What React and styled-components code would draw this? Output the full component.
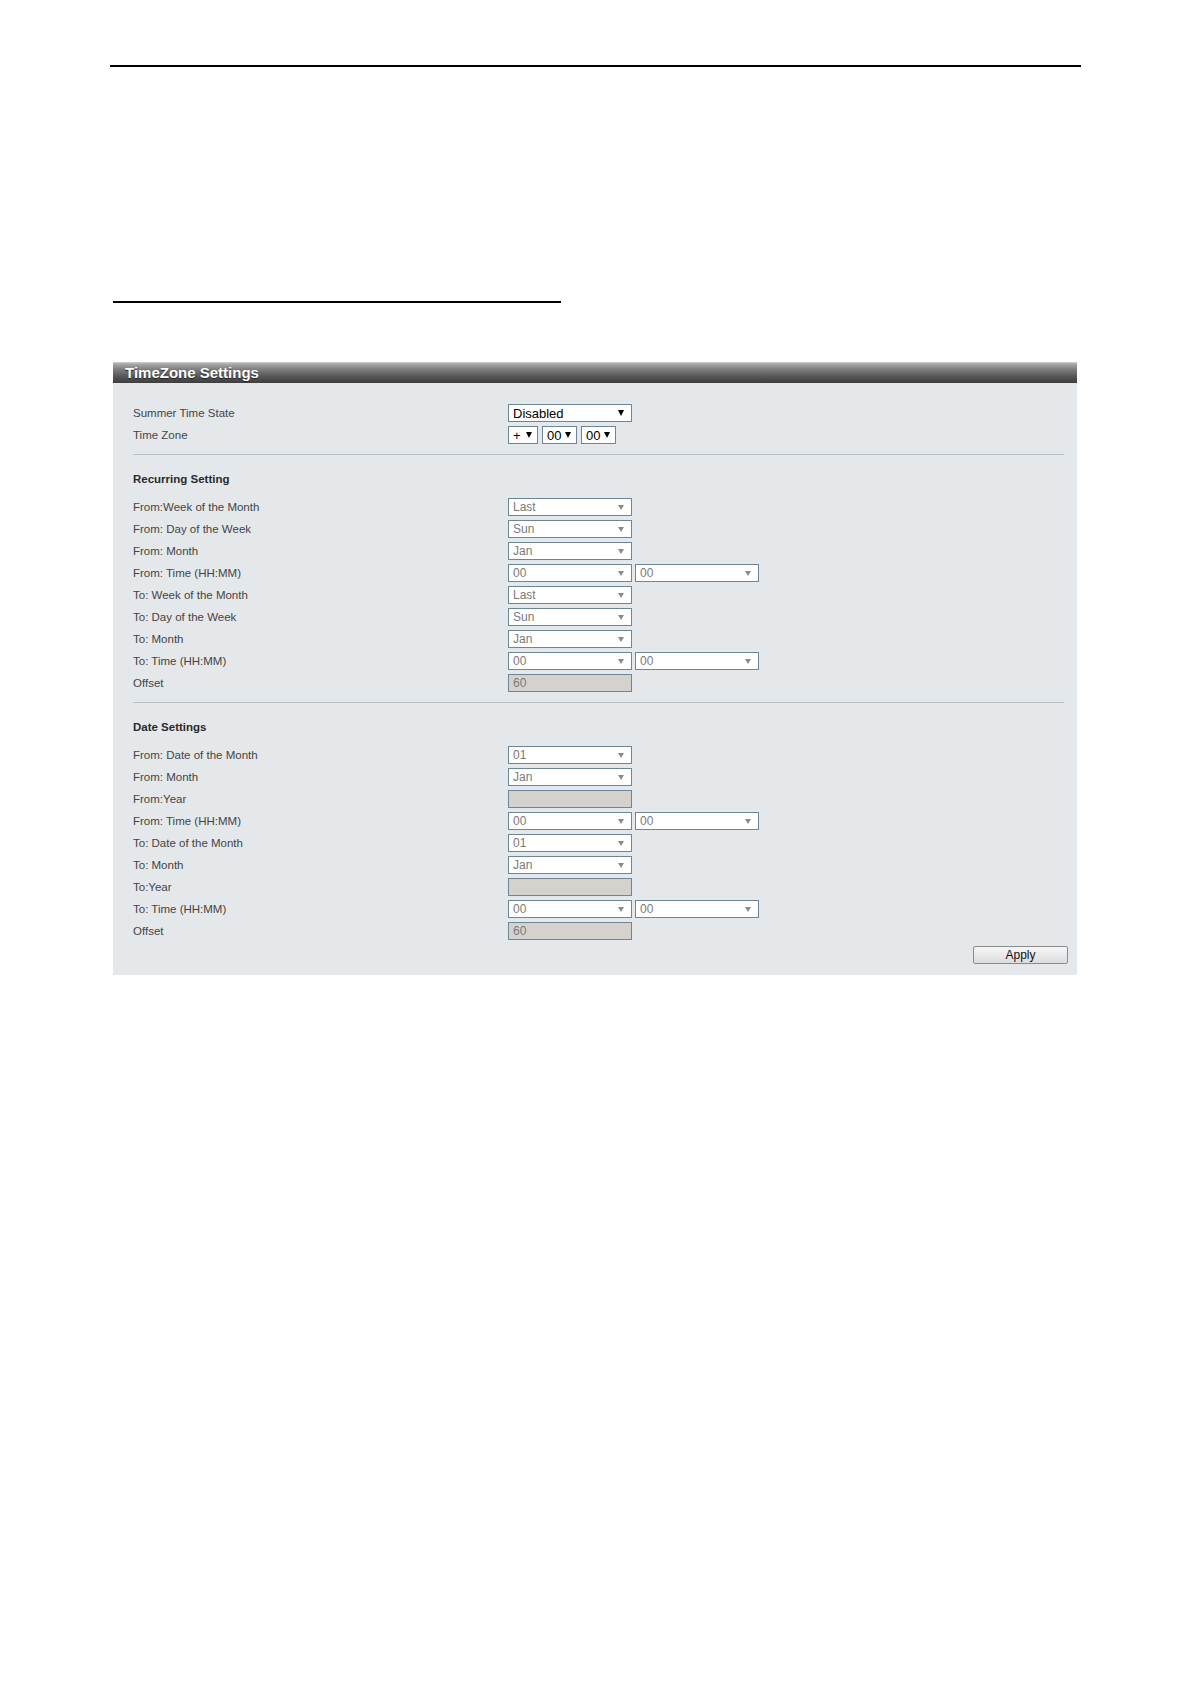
import React from "react";
import styled, { createGlobalStyle } from "styled-components";

const GlobalStyle = createGlobalStyle`
  body {
    margin: 0;
    background: #fff;
    font-family: "Liberation Sans", Arial, sans-serif;
  }
`;

const Page = styled.div`
  width: 1191px;
  min-height: 1684px;
  padding-top: 65px;
  box-sizing: border-box;
  background: #fff;
`;

const TopRule = styled.div`
  margin-left: 110px;
  width: 971px;
  height: 2px;
  background: #000;
`;

const SubRule = styled.div`
  margin: 234px 0 0 113px;
  width: 448px;
  height: 2px;
  background: #000;
`;

const Panel = styled.div`
  margin: 59px 0 0 113px;
  width: 964px;
`;

const PanelHeader = styled.div`
  height: 21px;
  padding-left: 12px;
  line-height: 21px;
  font-size: 15px;
  font-weight: bold;
  color: #fff;
  text-shadow: 0 1px 1px #222;
  background: linear-gradient(
    to bottom,
    #d2d2d2 0,
    #a8a8a8 2px,
    #7e7e7e 35%,
    #555 70%,
    #3e3e3e 100%
  );
`;

const PanelBody = styled.div`
  padding: 21px 9px 11px 20px;
  background: #e4e8eb;
`;

const Row = styled.div`
  display: flex;
  align-items: center;
  height: 18px;
  margin-bottom: 4px;
`;

const Label = styled.div`
  width: 375px;
  flex-shrink: 0;
  font-size: 11.5px;
  color: #444;
  white-space: nowrap;
`;

const Controls = styled.div`
  display: flex;
  gap: ${(p) => p.$gap || 3}px;
`;

/* margin-top collapses with the row's 4px bottom margin */
const Divider = styled.div`
  height: 1px;
  margin: 10px 4px 0 0;
  background: #b9c0c7;
`;

const SectionTitle = styled.div`
  margin: 16px 0 11px;
  height: 16px;
  line-height: 16px;
  font-size: 11.5px;
  font-weight: bold;
  color: #2a2a2a;
`;

const Box = styled.div`
  display: flex;
  align-items: center;
  justify-content: space-between;
  box-sizing: border-box;
  width: ${(p) => p.$width || 116}px;
  height: 18px;
  padding: 0 ${(p) => (p.$compact ? 5 : 7)}px 0 4px;
  border: 1px solid #6d8599;
  background: ${(p) => (p.$readonly ? "#d5d2cd" : "#fff")};
  color: ${(p) => (p.$active ? "#000" : "#7a7a7a")};
  font-size: ${(p) => (p.$active ? 13 : 12)}px;
  white-space: nowrap;
  overflow: hidden;
`;

const Arrow = styled.span`
  flex-shrink: 0;
  width: 0;
  height: 0;
  border-left: ${(p) => (p.$active ? 3 : 3)}px solid transparent;
  border-right: ${(p) => (p.$active ? 3 : 3)}px solid transparent;
  border-top: ${(p) => (p.$active ? 6 : 5)}px solid
    ${(p) => (p.$active ? "#000" : "#8a8a8a")};
`;

const ButtonRow = styled.div`
  display: flex;
  justify-content: flex-end;
  margin-top: 6px;
`;

const Button = styled.button`
  width: 95px;
  height: 18px;
  padding: 0;
  border: 1px solid #8c8c8c;
  border-radius: 2px;
  background: linear-gradient(to bottom, #f6f6f6, #dcdcdc);
  font-family: "Liberation Sans", Arial, sans-serif;
  font-size: 12px;
  color: #111;
`;

const Select = ({ value, width, active, compact }) => (
  <Box $width={width} $active={active} $compact={compact}>
    <span>{value}</span>
    <Arrow $active={active} />
  </Box>
);

const Field = ({ value = "" }) => (
  <Box $width={124} $readonly>
    <span>{value}</span>
  </Box>
);

const time = (
  <Controls>
    <Select value="00" width={124} />
    <Select value="00" width={124} />
  </Controls>
);

const recurring = [
  ["From:Week of the Month", <Select value="Last" width={124} />],
  ["From: Day of the Week", <Select value="Sun" width={124} />],
  ["From: Month", <Select value="Jan" width={124} />],
  ["From: Time (HH:MM)", time],
  ["To: Week of the Month", <Select value="Last" width={124} />],
  ["To: Day of the Week", <Select value="Sun" width={124} />],
  ["To: Month", <Select value="Jan" width={124} />],
  ["To: Time (HH:MM)", time],
  ["Offset", <Field value="60" />],
];

const dates = [
  ["From: Date of the Month", <Select value="01" width={124} />],
  ["From: Month", <Select value="Jan" width={124} />],
  ["From:Year", <Field />],
  ["From: Time (HH:MM)", time],
  ["To: Date of the Month", <Select value="01" width={124} />],
  ["To: Month", <Select value="Jan" width={124} />],
  ["To:Year", <Field />],
  ["To: Time (HH:MM)", time],
  ["Offset", <Field value="60" />],
];

const renderRow = ([label, control], i) => (
  <Row key={i}>
    <Label>{label}</Label>
    {control}
  </Row>
);

export default function App() {
  return (
    <Page>
      <GlobalStyle />
      <TopRule />
      <SubRule />
      <Panel>
        <PanelHeader>TimeZone Settings</PanelHeader>
        <PanelBody>
          <Row>
            <Label>Summer Time State</Label>
            <Select value="Disabled" width={124} active />
          </Row>
          <Row>
            <Label>Time Zone</Label>
            <Controls $gap={4}>
              <Select value="+" width={30} active compact />
              <Select value="00" width={35} active compact />
              <Select value="00" width={35} active compact />
            </Controls>
          </Row>
          <Divider />

          <SectionTitle>Recurring Setting</SectionTitle>
          {recurring.map(renderRow)}
          <Divider />

          <SectionTitle>Date Settings</SectionTitle>
          {dates.map(renderRow)}

          <ButtonRow>
            <Button>Apply</Button>
          </ButtonRow>
        </PanelBody>
      </Panel>
    </Page>
  );
}
